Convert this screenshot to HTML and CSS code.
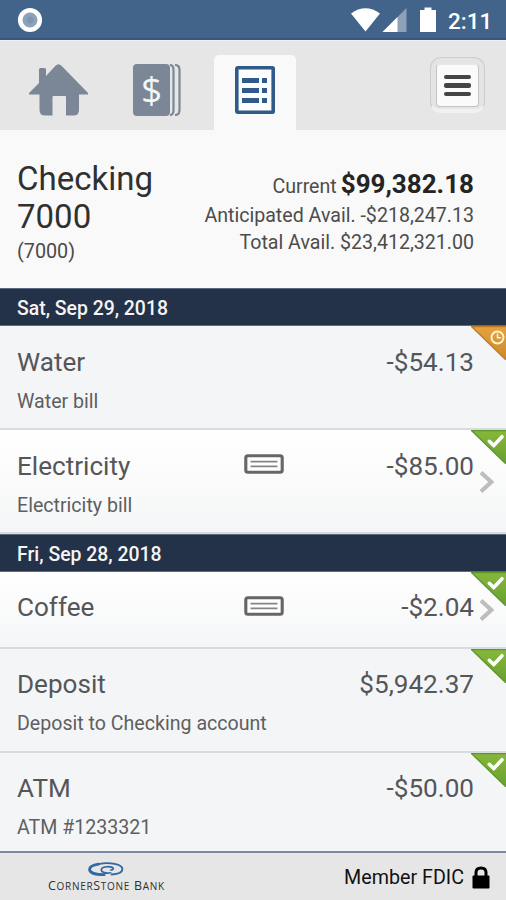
FILE: index.html
```html
<!DOCTYPE html>
<html lang="en">
<head>
<meta charset="utf-8">
<title>Checking 7000</title>
<link rel="stylesheet" href="styles.css">
</head>
<body>
<svg width="0" height="0" class="defs" aria-hidden="true">
  <defs>
    <linearGradient id="green" x1="0" y1="0" x2="0" y2="1"><stop offset="0" stop-color="#87b83b"/><stop offset="1" stop-color="#689f31"/></linearGradient>
    <linearGradient id="orange" x1="0" y1="0" x2="0" y2="1"><stop offset="0" stop-color="#e5a23e"/><stop offset="1" stop-color="#cd882b"/></linearGradient>
    <symbol id="cleared" viewBox="0 0 35 34"><path d="M0 0H35V34Z" fill="url(#green)"/><path d="M0 .5H35M0 0L35 34" fill="none" stroke="#5d962b" stroke-width="1.3"/><path d="M18.3 11.3L22.8 15.5L31 6.7" fill="none" stroke="#fff" stroke-width="3.6" stroke-linecap="round"/></symbol>
    <symbol id="pending" viewBox="0 0 35 34"><path d="M0 0H35V34Z" fill="url(#orange)"/><path d="M0 .5H35M0 0L35 34" fill="none" stroke="#bd7c24" stroke-width="1.3"/><circle cx="26.500" cy="11.5" r="6" fill="none" stroke="#fff3d7" stroke-width="1.9"/><path d="M26.500 7.5V11.8H30" fill="none" stroke="#fff3d7" stroke-width="1.5"/></symbol>
    <symbol id="check" viewBox="0 0 40 20"><rect x="1.8" y="1.8" width="36.400" height="16.400" rx="2" fill="#fff" stroke="#666" stroke-width="3.1"/><path d="M6.500 7.6H33.500M6.500 12.4H33.500" stroke="#858585" stroke-width="1.7"/></symbol>
    <symbol id="chevron" viewBox="0 0 16 24"><path d="M2 2.5L12.3 12L2 21.5" fill="none" stroke="#bdbdbd" stroke-width="4.200"/></symbol>
  </defs>
</svg>
<div class="screen">
  <div class="status">
    <svg class="record" viewBox="0 0 26 26"><circle cx="13" cy="13" r="9.8" fill="#8ca2bb" stroke="#fff" stroke-width="4.6"/><circle cx="13" cy="13" r="3.5" fill="#7d96ae"/></svg>
    <svg class="signals" viewBox="0 0 88 28" fill="#fff"><path d="M0 7.5Q14.5-3.2 29 7.5L14.5 25.5Z"/><path d="M31.500 26L55.500 2V26Z" opacity=".4"/><path d="M31.500 26L46.500 11V26Z"/><path d="M69 4H73.500V1.500H80.500V4H85V26H69Z"/></svg>
    <span class="time">2:11</span>
  </div>
  <nav class="tabs">
    <div class="tab"><svg class="home" viewBox="0 0 60 52" fill="#7b8796"><path d="M0 29L10 19V5.500Q10 4 11.500 4H15.500Q17 4 17 5.500V12L26.500 1.800Q29.500-1.300 32.500 1.800L59 29Q59.500 30.500 58 30.500H50V46Q50 51.500 44.500 51.500H37V33Q37 32 36 32H24.500Q23.500 32 23.500 33V51.500H16Q10.500 51.500 10.500 46V30.500H1Q-.5 30.500 0 29Z"/></svg></div>
    <div class="tab"><div class="accounts"><span class="book">$</span><svg viewBox="0 0 12 52" fill="none" stroke="#7d8796" stroke-width="2.200"><path d="M0 1Q3.500 1 3.500 6V46Q3.500 51 0 51M5 1Q9.500 1 9.500 6V46Q9.500 51 5 51"/></svg></div></div>
    <div class="tab active"><svg class="list" viewBox="0 0 40 48"><rect x="1.800" y="1.800" width="36.400" height="44.400" rx="1" fill="#fdfdfd" stroke="#2f5a8a" stroke-width="3.600"/><g fill="#2f5a8a"><path d="M7 12H24V17H7ZM7 22H24V27H7ZM7 32H24V37H7ZM27 12H32V17H27ZM27 22H32V27H27ZM27 32H32V37H27Z"/></g></svg></div>
    <div class="menu"><div class="menu-key"><i></i><i></i><i></i></div></div>
  </nav>
  <header class="summary">
    <div class="account"><h1>Checking<br>7000</h1><p>(7000)</p></div>
    <div class="balances"><p class="current"><span>Current</span><b>$99,382.18</b></p><p>Anticipated Avail. <span class="figure">-$218,247.13</span></p><p>Total Avail. <span class="figure">$23,412,321.00</span></p></div>
  </header>
  <main>
    <h2>Sat, Sep 29, 2018</h2>
    <article class="row"><div class="line"><span>Water</span><span class="amount">-$54.13</span></div><p class="note">Water bill</p><svg class="corner"><use href="#pending"/></svg></article>
    <article class="row light"><div class="line"><span>Electricity</span><svg class="cheque"><use href="#check"/></svg><span class="amount">-$85.00</span></div><p class="note">Electricity bill</p><svg class="corner"><use href="#cleared"/></svg><svg class="chevron"><use href="#chevron"/></svg></article>
    <h2>Fri, Sep 28, 2018</h2>
    <article class="row light short"><div class="line"><span>Coffee</span><svg class="cheque"><use href="#check"/></svg><span class="amount">-$2.04</span></div><svg class="corner"><use href="#cleared"/></svg><svg class="chevron"><use href="#chevron"/></svg></article>
    <article class="row deposit"><div class="line"><span>Deposit</span><span class="amount">$5,942.37</span></div><p class="note">Deposit to Checking account</p><svg class="corner"><use href="#cleared"/></svg></article>
    <article class="row atm"><div class="line"><span>ATM</span><span class="amount">-$50.00</span></div><p class="note">ATM #1233321</p><svg class="corner"><use href="#cleared"/></svg></article>
  </main>
  <footer>
    <div class="brand"><svg viewBox="0 0 40 16" fill="none" stroke="#3568a0" stroke-linecap="round"><path d="M18 13.500C9 13.500 2.500 11.500 2.500 8C2.500 5 7 3 12 2.300" stroke-width="3"/><path d="M12 2.200C24-.3 37.500 2.500 37.500 7.500C37.500 11 32 13 26 13.300" stroke-width="2"/><path d="M25 11.500C20 12.500 15 11 15 8.300C15 5.300 22 4.300 26 5.500C29 6.500 28 8.300 25 8.500" stroke-width="1.800"/></svg><div class="bank-name">C<small>ORNER</small>S<small>TONE</small> B<small>ANK</small></div></div>
    <div class="fdic"><span>Member FDIC</span><svg viewBox="0 0 18 23"><path d="M4 11V6.500Q4 2 9 2T14 6.500V11" fill="none" stroke="#000" stroke-width="3"/><rect x=".5" y="9.500" width="17" height="13" rx="1"/></svg></div>
  </footer>
</div>
</body>
</html>
```
FILE: styles.css
```css
* { box-sizing: border-box; }
body, h1, h2, p { margin: 0; font-weight: 400; }
body { font-family: Roboto, sans-serif; color: #555657; }
svg { display: block; flex: none; }
.defs { position: absolute; }
.screen { width: 506px; height: 900px; overflow: hidden; display: flex; flex-direction: column; background: #f9f9f9; }
.status { height: 40px; flex: none; background: #42638a; border-bottom: 2px solid #315a87; display: flex; align-items: center; padding: 2px 14px 0 17px; color: #fff; }
.record { width: 26px; height: 26px; }
.signals { width: 88px; height: 28px; margin-left: auto; }
.time { font-size: 22.5px; font-weight: 500; line-height: 28px; width: 44px; margin-left: 9px; white-space: nowrap; padding-top: 2px; }
.tabs { height: 90px; flex: none; display: grid; grid-template-columns: 115px 99px 82px 210px; background: #e6e6e6; padding-top: 14px; border-top: 1px solid #f0f0f0; }
.tab { display: flex; padding-top: 9px; }
.home { width: 60px; height: 52px; margin-left: 29px; }
.accounts { display: flex; height: 52px; margin-left: 18px; }
.accounts svg { width: 12px; height: 52px; }
.book { width: 37px; border-radius: 4px; background: #7b8796; color: #f3f4f4; font: 37px/50px "Open Sans", sans-serif; text-align: center; }
.active { background: #f9f9f9; border-radius: 5px 5px 0 0; justify-content: center; padding-top: 11px; }
.list { width: 40px; height: 48px; }
.menu { width: 55px; height: 56px; margin: 2px 0 0 134px; border: 1px solid #cdcdcd; border-bottom: 4px solid #f1f1f1; border-radius: 11px; background: #e4e4e4; padding: 6px 5px; }
.menu-key { height: 43px; width: 43px; border: 1px solid #c4c4c4; border-top-color: #e8e8e8; border-radius: 4px; background: #fafafa; display: flex; flex-direction: column; align-items: center; justify-content: center; gap: 4px; }
.menu-key i { width: 27px; height: 4.5px; border-radius: 2px; background: #444; }
.summary { height: 158px; flex: none; display: flex; justify-content: space-between; padding: 30px 32px 0 17px; background: #f9f9f9; }
h1 { font-size: 33px; line-height: 38px; color: #303030; }
.account p { font-size: 19.8px; line-height: 24px; margin-top: 4px; color: #4a4a4a; }
.balances { text-align: right; font-size: 19.6px; color: #4c4c4c; white-space: nowrap; padding-top: 8px; }
.balances p { line-height: 27px; }
.balances .current { display: flex; justify-content: flex-end; align-items: baseline; gap: 4px; height: 34px; line-height: 32px; }
.balances b { font-size: 26px; font-weight: 700; color: #242424; }
main { flex: 1; min-height: 0; overflow: hidden; }
h2 { height: 38px; padding: 1px 17px 0; background: #233248; border-top: 1px solid #5b6b80; border-bottom: 1px solid #5b6b80; color: #f5f5f5; font-size: 19.4px; line-height: 38px; font-weight: 500; }
.row { position: relative; height: 104px; background: #f4f5f7; border-bottom: 2px solid #d9dcde; padding: 17px 32px 0 17px; }
.row.light { background: linear-gradient(#fff, #f5f6f7); }
.row.short { height: 77px; }
.short, .deposit, .atm { padding-top: 16px; }
.line { display: grid; grid-template-columns: 227px 1fr auto; height: 38px; align-items: center; font-size: 26.1px; line-height: 38px; }
.amount { grid-column: 3; }
.cheque { width: 40px; height: 20px; margin-top: -4px; }
.short .cheque { margin-top: -2px; }
.note { font-size: 19.6px; line-height: 28px; margin-top: 7px; color: #5e5f60; }
.corner { position: absolute; right: 0; top: 0; width: 35px; height: 34px; }
.chevron { position: absolute; right: 11px; top: 40px; width: 16px; height: 24px; }
.short .chevron { top: 26px; }
footer { height: 49px; flex: none; background: #e6e6e6; border-top: 2px solid #7b88a2; display: flex; justify-content: space-between; padding: 9px 16px 0 48px; color: #111; }
.brand { width: 117px; }
.brand > svg { width: 40px; height: 15px; margin-left: 38px; }
.bank-name { font: 12.5px/13px "Open Sans", sans-serif; letter-spacing: .7px; white-space: nowrap; color: #303030; padding-top: 2px; }
.bank-name small { font-size: 10px; }
.fdic { display: flex; gap: 8px; height: 30px; align-items: center; font-size: 19.7px; }
.fdic svg { width: 18px; height: 23px; }
```
